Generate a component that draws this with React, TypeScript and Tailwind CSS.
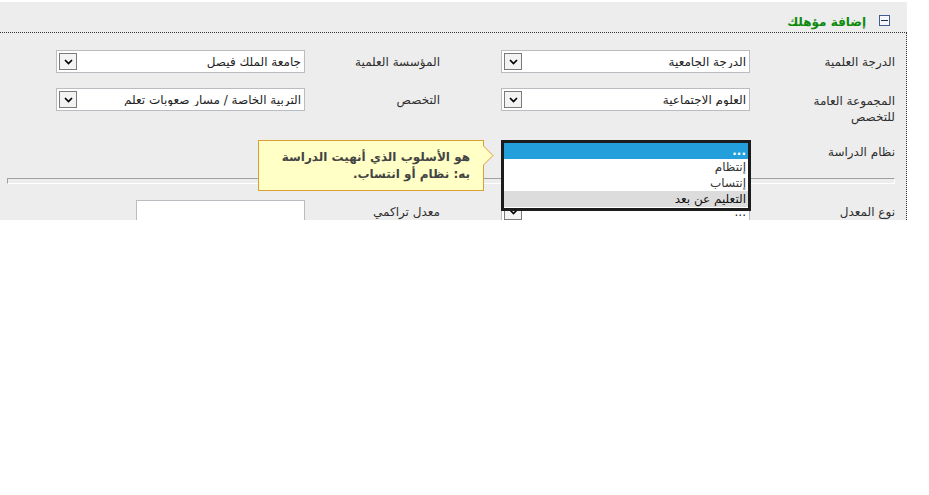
import type { ReactNode } from 'react';

const FONT = { fontFamily: "Tahoma, 'DejaVu Sans', 'Noto Sans', sans-serif" };

function Chevron() {
  return (
    <svg width="9" height="6" viewBox="0 0 9 6" className="block">
      <path d="M1 1 L4.5 4.5 L8 1" fill="none" stroke="#000" strokeWidth="1.7" />
    </svg>
  );
}

function Select({ value, width = 'w-[249px]' }: { value: string; width?: string }) {
  return (
    <div
      className={`${width} h-[23px] shrink-0 flex items-center justify-between bg-white border border-[#b9bcc0] pr-[3px] pl-[2px]`}
    >
      <span className="text-[12px] text-[#222] truncate leading-none">{value}</span>
      <span className="w-[18px] h-[17px] flex items-center justify-center border border-[#7a7a7a] bg-[#f3f3f3]">
        <Chevron />
      </span>
    </div>
  );
}

function Label({ children, wide }: { children: ReactNode; wide?: boolean }) {
  return (
    <div
      className={`${wide ? 'w-[156px] pr-[11px]' : 'w-[196px] pr-[61px]'} shrink-0 text-[12px] leading-[16px] text-[#2e2e2e]`}
    >
      {children}
    </div>
  );
}

export default function App() {
  return (
    <div className="w-[929px] h-[495px] bg-white" style={FONT}>
      <div dir="rtl" className="relative mt-[2px] w-[907px] h-[218px] overflow-hidden bg-[#ededed]">
        <div className="h-[30px] flex items-start pt-[13px] pr-[17px] gap-[13px]">
          <span className="w-[11px] h-[11px] border border-[#3d5c8f] bg-[#f6f6f6] flex items-center justify-center">
            <span className="w-[7px] h-[1px] bg-[#1d2d55]" />
          </span>
          <span className="text-[12px] font-bold text-[#0b8a0b] leading-[12px] mt-[1px]">إضافة مؤهلك</span>
        </div>

        <div className="h-[200px] border-t border-r border-dotted border-[#333]">
          <div className="flex items-center mt-[17px]">
            <Label wide>الدرجة العلمية</Label>
            <Select value="الدرجة الجامعية" />
            <Label>المؤسسة العلمية</Label>
            <Select value="جامعة الملك فيصل" />
          </div>

          <div className="flex items-start mt-[15px]">
            <div className="w-[156px] pr-[11px] pt-[5px] shrink-0 text-[12px] leading-[16px] text-[#2e2e2e]">
              المجموعة العامة
              <br />
              للتخصص
            </div>
            <Select value="العلوم الاجتماعية" />
            <div className="w-[196px] pr-[61px] pt-[4px] shrink-0 text-[12px] leading-[16px] text-[#2e2e2e]">التخصص</div>
            <Select value="التربية الخاصة / مسار صعوبات تعلم" />
          </div>

          {/* the select of this row sits under the open listbox */}
          <div className="flex items-center mt-[15px]">
            <Label wide>نظام الدراسة</Label>
            <Select value="" />
          </div>

          <div className="mt-[15px] mr-[11px] ml-[7px] h-[6px] border-t border-l border-t-[#a0a0a0] border-l-[#a0a0a0] border-b border-r border-b-white border-r-white" />

          <div className="flex items-center mt-[16px]">
            <Label wide>نوع المعدل</Label>
            <Select value="..." />
            <Label>معدل تراكمي</Label>
            <div className="w-[169px] h-[23px] bg-white border border-[#b9bcc0]" />
          </div>
        </div>

        {/* open listbox */}
        <div className="absolute left-[501px] top-[138px] w-[250px] h-[71px] border-[3px] border-[#1c1c1c] bg-white text-[12px] leading-[16px]">
          <div className="h-[16px] bg-[#239fdb] text-white pr-[2px] font-bold">...</div>
          <div className="h-[16px] text-[#333] pr-[2px]">إنتظام</div>
          <div className="h-[16px] text-[#333] pr-[2px]">إنتساب</div>
          <div className="h-[16px] bg-[#dcdcdc] text-[#111] pr-[2px]">التعليم عن بعد</div>
        </div>

        {/* tooltip */}
        <div className="absolute left-[258px] top-[138px] w-[226px] h-[51px] bg-[#ffffc6] border border-[#dc9f33] pr-[13px] pt-[8px] text-[12px] leading-[17px] font-bold text-[#444]">
          هو الأسلوب الذي أنهيت الدراسة
          <br />
          به: نظام أو انتساب.
        </div>
        <svg className="absolute left-[483px] top-[143px]" width="11" height="22" viewBox="0 0 11 22">
          <polygon points="0,0.5 10,10.5 0,20.5" fill="#ffffc6" />
          <polyline points="0,0.5 10,10.5 0,20.5" fill="none" stroke="#dc9f33" strokeWidth="1" />
        </svg>
      </div>
    </div>
  );
}
